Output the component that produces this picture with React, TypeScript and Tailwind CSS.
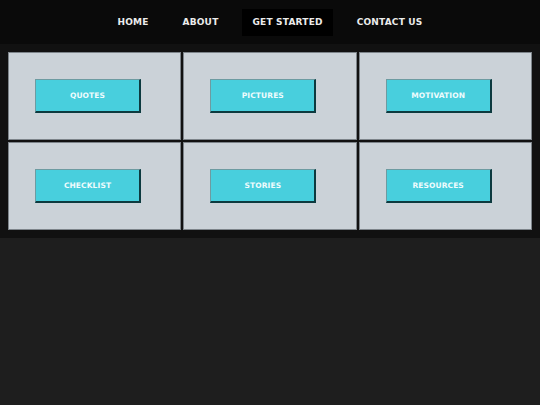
import { FC } from "react";

const navItems = ["HOME", "ABOUT", "GET STARTED", "CONTACT US"];
const tiles = ["QUOTES", "PICTURES", "MOTIVATION", "CHECKLIST", "STORIES", "RESOURCES"];

const Tile: FC<{ label: string }> = ({ label }) =>
{
	return (
		<div className="h-[88px] border border-[#7d848a] bg-[#cbd2d8] pl-[26px] pt-[26px]">
			<button
				type="button"
				className="flex h-[34px] w-[106px] items-center justify-center border-t border-l border-t-[#6d9ba1] border-l-[#6d9ba1] border-b-2 border-r-2 border-b-[#0d3a3f] border-r-[#0d3a3f] bg-[#48cfdd] pt-[1px] text-[7.5px] font-bold tracking-[0.1px] text-[#effcfd]"
			>
				{label}
			</button>
		</div>
	)
}

export default function App()
{
	return (
		<div className="min-h-screen bg-[#1e1e1e] font-['DejaVu_Sans',sans-serif]">
			<nav className="flex h-[44px] items-center justify-center gap-[14px] bg-[#0a0a0a] pt-[1px]">
				{navItems.map((item) => (
					<a
						key={item}
						href="#"
						className={`flex h-[27px] items-center px-[10px] pt-[1px] text-[9px] font-bold tracking-[0.2px] text-[#ececec] ${item === "GET STARTED" ? "bg-black" : ""}`}
					>
						{item}
					</a>
				))}
			</nav>

			<section className="bg-[#111111] p-[8px]">
				<div className="grid grid-cols-3 gap-[2px]">
					{tiles.map((t) => (
						<Tile key={t} label={t} />
					))}
				</div>
			</section>
		</div>
	)
}
